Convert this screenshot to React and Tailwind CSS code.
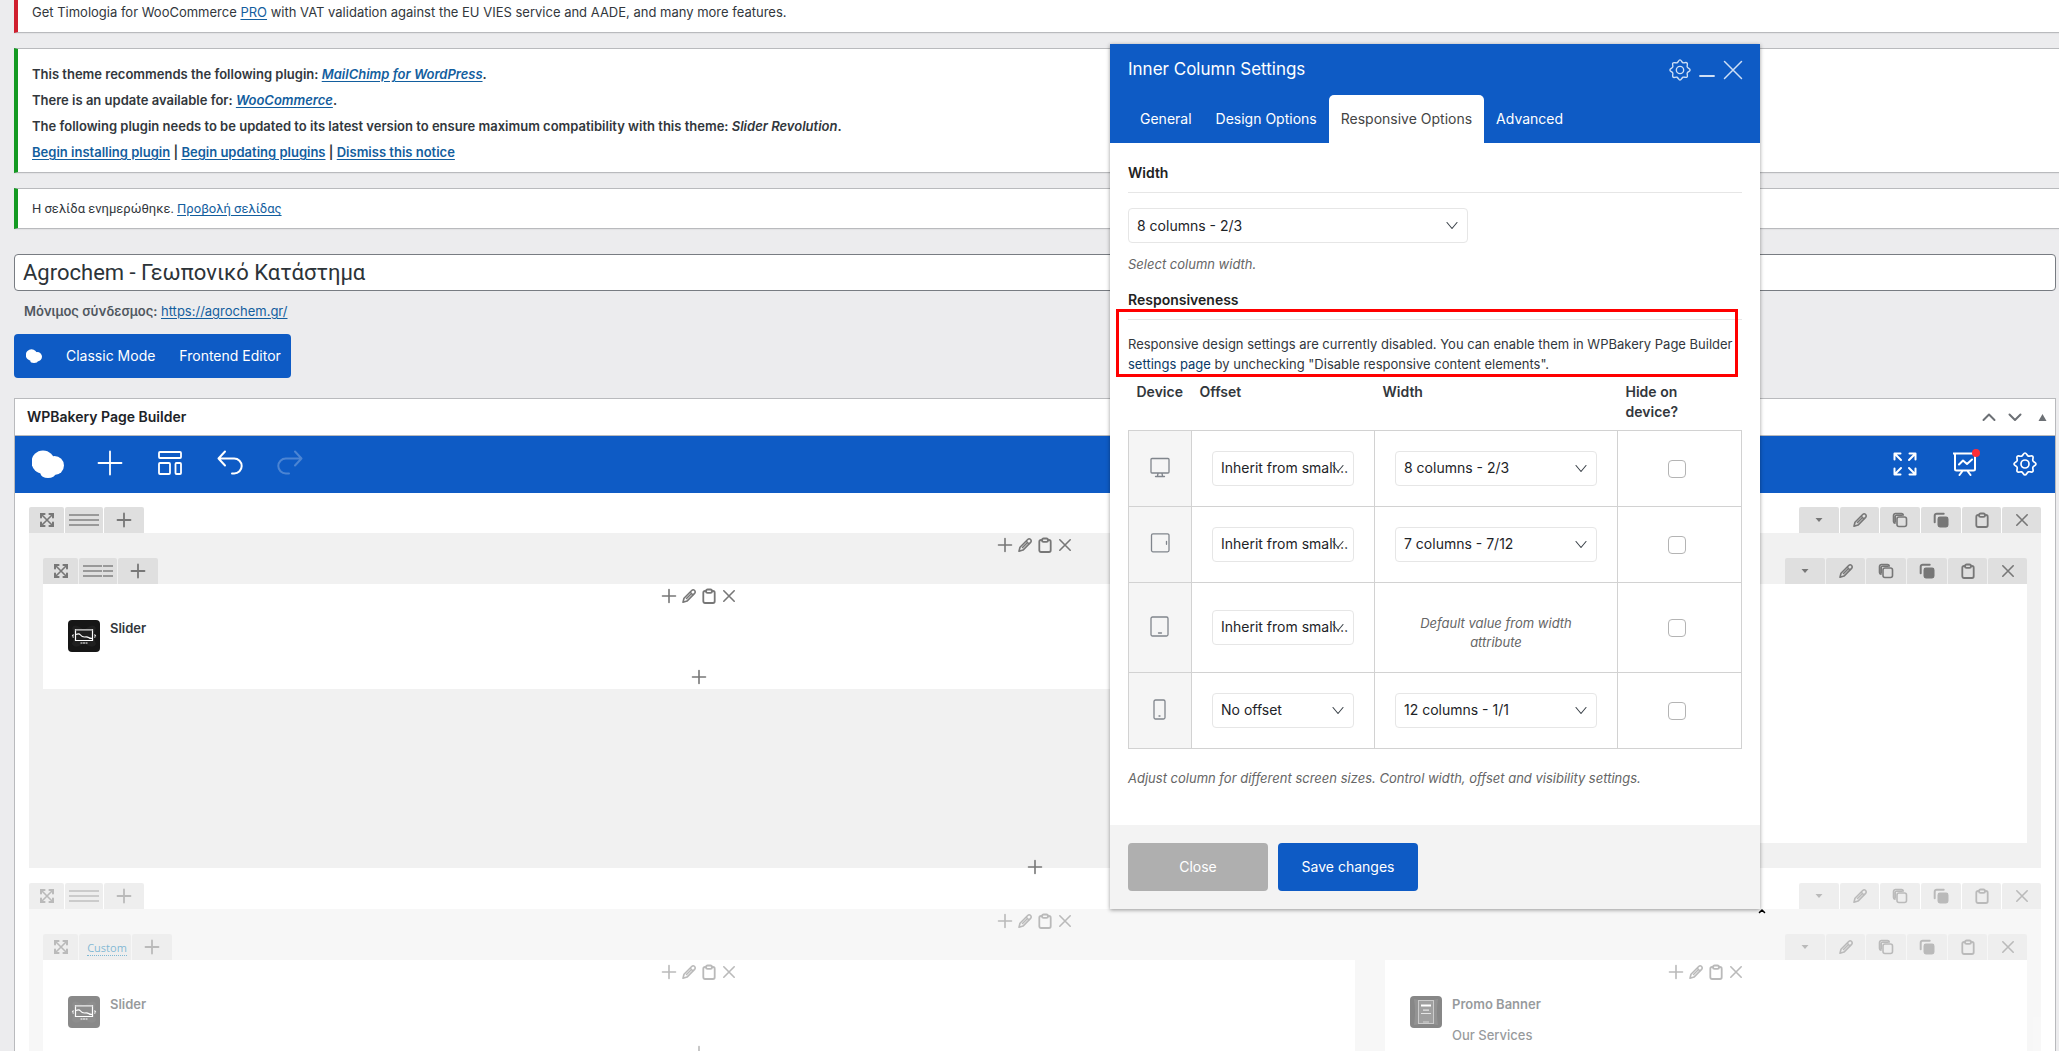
import React, { useState } from 'react';

const OFFSETS = ['Inherit from smaller', 'No offset', '1 column - 1/12'];
const WIDTHS = ['8 columns - 2/3', '7 columns - 7/12', '12 columns - 1/1'];

function Icon({ size = 16, box = 16, sw = 1.5, className = '', children }) {
  return (
    <svg
      width={size}
      height={size}
      viewBox={`0 0 ${box} ${box}`}
      fill="none"
      stroke="currentColor"
      strokeWidth={sw}
      strokeLinecap="round"
      strokeLinejoin="round"
      className={`shrink-0 ${className}`}
      aria-hidden="true"
    >
      {children}
    </svg>
  );
}

const Plus = ({ size = 16, sw = 1.6 }) => (
  <Icon size={size} sw={sw}>
    <path d="M8 1.500v13M1.500 8h13" />
  </Icon>
);

const Pencil = () => (
  <Icon sw={1.6}>
    <path d="M2 14.200l1-4L10.700 2.500a2 2 0 0 1 2.900 2.900L6 13.100z" />
    <path d="M9.500 4.500l2.200 2.200M5.500 10.500l4-4" />
  </Icon>
);

const Clipboard = () => (
  <Icon sw={1.8}>
    <path d="M4.500 3H4a1.700 1.700 0 0 0-1.700 1.700v8.600A1.700 1.700 0 0 0 4 15h8a1.700 1.700 0 0 0 1.700-1.700V4.700A1.700 1.700 0 0 0 12 3h-.5" />
    <rect x="5" y="1.500" width="6" height="3.400" rx="1.600" />
  </Icon>
);

const Cross = () => (
  <Icon sw={1.6}>
    <path d="M2.800 2.800l10.400 10.400M13.200 2.800L2.800 13.200" />
  </Icon>
);

const Copy = () => (
  <Icon sw={1.6}>
    <rect x="5" y="5" width="9.500" height="9.500" rx="2" />
    <path d="M3 11.200A1.900 1.900 0 0 1 1.500 9.400V3.500a2 2 0 0 1 2-2h6a1.900 1.900 0 0 1 1.800 1.500M3.200 10V4.600a1.400 1.400 0 0 1 1.400-1.400H10" />
  </Icon>
);

const CopyFilled = () => (
  <Icon sw={1.6}>
    <rect x="5.300" y="5.300" width="9.400" height="9.400" rx="1.600" fill="currentColor" />
    <path d="M1.700 10.300V3.700a2 2 0 0 1 2-2h7" strokeWidth="2" />
  </Icon>
);

const Move = () => (
  <Icon size={14} box={14} sw={1.6}>
    <path d="M2 2l10 10M12 2L2 12" />
    <path d="M1 4.600V1h3.600M9.400 1H13v3.600M13 9.400V13H9.400M4.600 13H1V9.400" strokeLinejoin="miter" strokeWidth="2" />
  </Icon>
);

const Caret = () => (
  <svg width="8" height="4" viewBox="0 0 8 4" fill="currentColor" aria-hidden="true">
    <path d="M0.500 0h7L4 4z" />
  </svg>
);

const Gear = ({ size = 24, sw = 1.7 }) => (
  <Icon size={size} box={24} sw={sw}>
    <path d="M12 1c1.600 0 1.800 2.500 3.300 3.100s3.300-1 4.400.2-.4 2.900.2 4.400S23 10.400 23 12s-2.500 1.800-3.100 3.300 1 3.300-.2 4.400-2.900-.4-4.400.2S13.600 23 12 23s-1.800-2.500-3.300-3.100-3.300 1-4.400-.2.400-2.900-.2-4.400S1 13.600 1 12s2.500-1.800 3.100-3.300-1-3.300.2-4.400 2.900.4 4.400-.2S10.400 1 12 1z" />
    <circle cx="12" cy="12" r="4" />
  </Icon>
);

const Logo = ({ width, height }) => (
  <svg width={width} height={height} viewBox="0 0 32 28" fill="currentColor" aria-hidden="true">
    <circle cx="11" cy="12" r="11.500" />
    <circle cx="22.500" cy="15.500" r="9.500" />
    <ellipse cx="16" cy="23.500" rx="7.500" ry="4.500" />
  </svg>
);

const SliderIcon = () => (
  <svg width="32" height="32" viewBox="0 0 32 32" className="shrink-0" fill="none" stroke="#fff" aria-hidden="true">
    <rect width="32" height="32" rx="4" fill="#161616" stroke="none" />
    <path d="M4 8q2-6 12 2 10-8 12-2-1 5-4 8 3 4 4 8-3 6-12-1-9 7-12 1 1-4 4-8-3-3-4-8z" fill="#202020" stroke="none" />
    <path d="M7.500 9.500h17v11h-17z" strokeWidth="1.200" />
    <path d="M7.500 10h17" stroke="#999" strokeWidth="1.600" />
    <path d="M8 14.500q3-1.500 4.500.5t4 2q3-.5 4 .5t4 1" strokeWidth="1.200" />
    <path d="M5.500 14.500L4.500 16l1 1.500M26.500 14.500l1 1.500-1 1.500M12.500 23h7" strokeWidth="1.200" strokeDasharray="2 .5" />
  </svg>
);

const PromoIcon = () => (
  <svg width="32" height="32" viewBox="0 0 32 32" className="shrink-0" fill="none" stroke="#fff" aria-hidden="true">
    <rect width="32" height="32" rx="4" fill="#111" stroke="none" />
    <path d="M4 3q12 3 24 0-2 13 0 26-12-3-24 0 2-13 0-26z" fill="#2a2a2a" stroke="none" />
    <rect x="8.500" y="4.500" width="15" height="23" fill="#444" stroke="#999" />
    <path d="M11 9.500h10" strokeWidth="2" />
    <path d="M13 14.200h6M11 17.500h10" stroke="#ccc" strokeWidth="1.200" />
    <path d="M13 26h6" stroke="#aaa" />
  </svg>
);

function Notice({ tone, className = '', children }) {
  return (
    <div className={`border border-r-0 border-l-4 border-[#b9babd] bg-white px-[14px] text-[13px] shadow-[0_1px_1px_rgba(0,0,0,0.04)] ${tone} ${className}`}>
      {children}
    </div>
  );
}

function Link({ children }) {
  return (
    <a href="#" className="text-[#135e9e] underline underline-offset-2">
      {children}
    </a>
  );
}

function Tab({ label, className = 'w-10', children }) {
  return (
    <button type="button" aria-label={label} className={`flex h-[26px] items-center justify-center rounded-t-xs bg-[#dfdfdf] ${className}`}>
      {children}
    </button>
  );
}

function RowBar({ layout }) {
  return (
    <div className="flex justify-between text-[#777]">
      <div className="flex gap-px">
        <Tab label="Move row" className="w-[35px]"><Move /></Tab>
        {layout === 'full' && (
          <Tab label="Row layout" className="w-[38px]">
            <svg width="30" height="14" viewBox="0 0 30 14" stroke="#999" strokeWidth="2" aria-hidden="true"><path d="M0 2h30M0 7h30M0 12h30" /></svg>
          </Tab>
        )}
        {layout === 'split' && (
          <Tab label="Row layout" className="w-[38px]">
            <svg width="30" height="14" viewBox="0 0 30 14" stroke="#999" strokeWidth="2" aria-hidden="true"><path d="M0 2h19M20 2h10M0 7h19M20 7h10M0 12h19M20 12h10" /></svg>
          </Tab>
        )}
        {layout === 'custom' && (
          <div className="flex h-[26px] w-[52px] items-end justify-center rounded-t-xs bg-[#dfdfdf] pb-1 pl-1">
            <a href="#" className="border-b border-dotted border-[#0073aa] font-['Open_Sans',sans-serif] text-[11px] leading-[14px] text-[#0073aa]">Custom</a>
          </div>
        )}
        <Tab label="Add column"><Plus sw={1.8} /></Tab>
      </div>
      <div className="flex gap-px">
        <Tab label="Toggle row"><Caret /></Tab>
        <Tab label="Edit row" className="w-[39px]"><Pencil /></Tab>
        <Tab label="Copy row"><Copy /></Tab>
        <Tab label="Clone row"><CopyFilled /></Tab>
        <Tab label="Paste" className="w-[39px]"><Clipboard /></Tab>
        <Tab label="Delete row" className="w-[39px]"><Cross /></Tab>
      </div>
    </div>
  );
}

function ColumnControls() {
  return (
    <div className="flex h-[25px] items-center justify-center gap-1 pb-px text-[#777]">
      <button type="button" aria-label="Add element"><Plus /></button>
      <button type="button" aria-label="Edit column"><Pencil /></button>
      <button type="button" aria-label="Paste"><Clipboard /></button>
      <button type="button" aria-label="Delete column"><Cross /></button>
    </div>
  );
}

function Element({ icon, title, text }) {
  return (
    <div className="flex gap-[10px] px-[25px] pt-[11px] text-[13px] leading-[17px]">
      {icon}
      <div>
        <h4 className="font-semibold text-[#32373c]">{title}</h4>
        {text && <p className="mt-[14px] font-medium">{text}</p>}
      </div>
    </div>
  );
}

function AddButton() {
  return (
    <button type="button" aria-label="Add element" className="mx-auto flex h-6 w-10 items-center justify-center text-[#777]">
      <Plus />
    </button>
  );
}

function Select({ label, options, value, className = '' }) {
  return (
    <div className={`relative ${className}`}>
      <select
        aria-label={label}
        defaultValue={value}
        className="block h-[35px] w-full appearance-none truncate rounded border border-[#e6e6e6] bg-white pr-1 pl-2 text-sm text-[#1d2327]"
      >
        {options.map((o) => (
          <option key={o}>{o}</option>
        ))}
      </select>
      <Icon size={12} box={12} sw={1.1} className="pointer-events-none absolute top-3 right-[10px] text-[#3c434a]">
        <path d="M1 2.500l5 6 5-6" />
      </Icon>
    </div>
  );
}

const DEVICES = [
  {
    name: 'Desktop',
    offset: 'Inherit from smaller',
    width: '8 columns - 2/3',
    icon: <path d="M3 1.500h16a1 1 0 0 1 1 1V15a1 1 0 0 1-1 1H3a1 1 0 0 1-1-1V2.500a1 1 0 0 1 1-1zM9 16.500l-.5 2.500M13 16.500l.5 2.500M6.500 19.500h9" />,
  },
  {
    name: 'Tablet landscape',
    offset: 'Inherit from smaller',
    width: '7 columns - 7/12',
    icon: <path d="M4 .8h14.500a1.500 1.500 0 0 1 1.500 1.500v15a1.500 1.500 0 0 1-1.500 1.500H4a1.500 1.500 0 0 1-1.500-1.500v-15A1.500 1.500 0 0 1 4 .8zM17.500 8.300v3" />,
  },
  {
    name: 'Tablet portrait',
    offset: 'Inherit from smaller',
    width: null,
    icon: <path d="M3.500 1h14A1.500 1.500 0 0 1 19 2.500v16a1.500 1.500 0 0 1-1.500 1.500h-14A1.500 1.500 0 0 1 2 18.500v-16A1.500 1.500 0 0 1 3.500 1zM9.500 17h3" />,
  },
  {
    name: 'Mobile',
    offset: 'No offset',
    width: '12 columns - 1/1',
    icon: <path d="M6.500 1h8A1.500 1.500 0 0 1 16 2.500v16a1.500 1.500 0 0 1-1.500 1.500h-8A1.500 1.500 0 0 1 5 18.500v-16A1.500 1.500 0 0 1 6.500 1zM10 17h1" />,
  },
];

const TABS = ['General', 'Design Options', 'Responsive Options', 'Advanced'];

function SettingsPanel() {
  const [tab, setTab] = useState('Responsive Options');

  return (
    <section className="absolute top-11 left-[1110px] z-10 w-[650px] bg-white shadow-[0_1px_4px_rgba(0,0,0,0.4)]">
      <header className="bg-[#0e5bc5] pr-[17px] pl-[18px] text-white">
        <div className="flex h-[51px] items-center justify-between">
          <h3 className="text-[17px]">Inner Column Settings</h3>
          <div className="flex items-center gap-2 text-[#cfdff5]">
            <button type="button" aria-label="Settings"><Gear size={22} sw={1.5} /></button>
            <button type="button" aria-label="Minimize">
              <Icon sw={1.8}><path d="M1 14h14" /></Icon>
            </button>
            <button type="button" aria-label="Close panel">
              <Icon size={20} box={20} sw={1.5}><path d="M1.500 1.500l17 17M18.500 1.500l-17 17" /></Icon>
            </button>
          </div>
        </div>
        <nav className="flex">
          {TABS.map((t) => (
            <button
              key={t}
              type="button"
              onClick={() => setTab(t)}
              className={`h-12 rounded-t-[5px] px-3 text-sm ${t === tab ? 'bg-white text-[#444]' : 'text-white'}`}
            >
              {t}
            </button>
          ))}
        </nav>
      </header>

      <div className="px-[18px] pt-5 pb-[37px] text-[#32373c]">
        <h4 className="border-b border-[#e6e6e6] pb-[9px] text-sm leading-5 font-semibold text-[#222]">Width</h4>
        <Select label="Width" options={WIDTHS} value="8 columns - 2/3" className="mt-[15px] w-[340px]" />
        <p className="mt-[11px] text-[13px] leading-5 text-[#666] italic">Select column width.</p>

        <h4 className="mt-4 border-b border-[#e6e6e6] pb-[9px] text-sm leading-5 font-semibold text-[#222]">Responsiveness</h4>
        <div className="relative mt-[14px] text-[13px] leading-5">
          <div className="pointer-events-none absolute -top-[25px] right-1 -bottom-[3px] -left-3 border-[3px] border-[#ff0000]" />
          Responsive design settings are currently disabled. You can enable them in WPBakery Page Builder{' '}
          <a href="#" className="text-[#0a3a66]">settings page</a> by unchecking "Disable responsive content elements".
        </div>

        <table className="mt-2 w-full table-fixed border-collapse text-sm">
          <colgroup>
            <col className="w-[63px]" />
            <col className="w-[183px]" />
            <col className="w-[243px]" />
            <col />
          </colgroup>
          <thead>
            <tr className="text-left align-top leading-5">
              <th className="h-12 px-2 font-semibold">Device</th>
              <th className="px-2 font-semibold">Offset</th>
              <th className="px-2 font-semibold">Width</th>
              <th className="px-2 font-semibold">Hide on<br />device?</th>
            </tr>
          </thead>
          <tbody>
            {DEVICES.map((d) => (
              <tr key={d.name} className={d.width ? 'h-[76px]' : 'h-[90px]'}>
                <td className="border border-[#d2d2d2] bg-[#f5f5f5]">
                  <Icon size={22} box={22} sw={1.3} className="mx-auto text-[#80858c]">{d.icon}</Icon>
                </td>
                <td className="border border-[#d2d2d2] px-5">
                  <Select label={`${d.name} offset`} options={OFFSETS} value={d.offset} />
                </td>
                <td className="border border-[#d2d2d2] px-5">
                  {d.width ? (
                    <Select label={`${d.name} width`} options={WIDTHS} value={d.width} />
                  ) : (
                    <p className="pt-3 text-center text-[13px] leading-[19px] text-[#666] italic">Default value from width attribute</p>
                  )}
                </td>
                <td className="border border-[#d2d2d2] text-center">
                  <input
                    type="checkbox"
                    aria-label={`Hide on ${d.name}`}
                    className="mr-[6px] size-[18px] appearance-none rounded border border-[#b4b4b4] bg-white align-middle"
                  />
                </td>
              </tr>
            ))}
          </tbody>
        </table>
        <p className="mt-[19px] text-[13px] leading-5 text-[#666] italic">
          Adjust column for different screen sizes. Control width, offset and visibility settings.
        </p>
      </div>

      <footer className="flex gap-[10px] bg-[#f3f3f3] p-[18px] text-sm text-white">
        <button type="button" className="h-12 w-[140px] rounded bg-[#afafaf]">Close</button>
        <button type="button" className="h-12 w-[140px] rounded bg-[#0e5bc5]">Save changes</button>
      </footer>
      <Icon size={8} box={8} sw={1.6} className="absolute -right-[6px] -bottom-[6px] text-black">
        <path d="M1.500 5.500L4 3l2.500 2.500" />
      </Icon>
    </section>
  );
}

export default function App() {
  return (
    <div className="relative h-screen overflow-hidden bg-[#ececee] pr-[3px] pl-[14px] font-['Inter',sans-serif] text-[13px] text-[#32373c]">
      <div className="-mr-[3px] flex flex-col gap-[15px]">
        <Notice tone="border-l-[#d01f2e]" className="border-t-0 pt-[2px] pb-[10px] leading-5">
          Get Timologia for WooCommerce <Link>PRO</Link> with VAT validation against the EU VIES service and AADE, and many more features.
        </Notice>
        <Notice tone="border-l-[#149a22]" className="pt-3 pb-[7px] leading-[26px] font-semibold">
          <p>This theme recommends the following plugin: <em><Link>MailChimp for WordPress</Link></em>.</p>
          <p>There is an update available for: <em><Link>WooCommerce</Link></em>.</p>
          <p>The following plugin needs to be updated to its latest version to ensure maximum compatibility with this theme: <em>Slider Revolution</em>.</p>
          <p><Link>Begin installing plugin</Link> | <Link>Begin updating plugins</Link> | <Link>Dismiss this notice</Link></p>
        </Notice>
        <Notice tone="border-l-[#149a22]" className="py-[10px] font-['Roboto',sans-serif] leading-[19px]">
          Η σελίδα ενημερώθηκε. <Link>Προβολή σελίδας</Link>
        </Notice>
      </div>

      <input
        id="title"
        aria-label="Title"
        defaultValue="Agrochem - Γεωπονικό Κατάστημα"
        className="mt-[25px] block h-[37px] w-full rounded border border-[#787c82] bg-white px-2 font-['Roboto',sans-serif] text-[22px] text-[#2c3338]"
      />
      <p className="mt-[10px] px-[10px] leading-5 text-[#50575e]">
        <strong className="font-semibold">Μόνιμος σύνδεσμος:</strong> <Link>https://agrochem.gr/</Link>
      </p>

      <div className="mt-[13px] flex h-11 w-fit items-center rounded bg-[#0e5bc5] pr-[10px] pl-3 text-sm text-white">
        <Logo width="16" height="14" />
        <button type="button" className="ml-6">Classic Mode</button>
        <button type="button" className="ml-6">Frontend Editor</button>
      </div>

      <div className="mt-5 border border-[#b9babd] bg-white">
        <div className="flex h-[37px] items-center justify-between border-b border-[#b9babd] pr-2 pl-3">
          <h2 className="text-sm font-semibold text-[#1d2327]">WPBakery Page Builder</h2>
          <div className="flex items-center gap-3 text-[#6c7075]">
            <button type="button" aria-label="Move up"><Icon size={14} box={14} sw={2}><path d="M1.500 10L7 4.500l5.500 5.500" /></Icon></button>
            <button type="button" aria-label="Move down"><Icon size={14} box={14} sw={2}><path d="M1.500 4.500L7 10l5.500-5.500" /></Icon></button>
            <button type="button" aria-label="Toggle panel" className="pl-1">
              <svg width="9" height="7" viewBox="0 0 9 7" fill="currentColor" aria-hidden="true"><path d="M4.500 0L8.500 7h-8z" /></svg>
            </button>
          </div>
        </div>

        <div className="flex h-[57px] items-center justify-between bg-[#0e5bc5] pb-px text-white">
          <div className="flex">
            <a href="#" aria-label="WPBakery" className="flex w-[65px] justify-center"><Logo width="32" height="28" /></a>
            <button type="button" aria-label="Add element" className="flex w-[60px] justify-center">
              <Icon size={26} box={26} sw={1.8}><path d="M13 1.500v23M1.500 13h23" /></Icon>
            </button>
            <button type="button" aria-label="Templates" className="flex w-[60px] justify-center">
              <Icon size={26} box={26} sw={1.8}>
                <rect x="2" y="2" width="22" height="6" rx="1" />
                <rect x="2" y="13" width="11" height="11" rx="1" />
                <rect x="18.500" y="13" width="5.500" height="11" rx="1" />
              </Icon>
            </button>
            <button type="button" aria-label="Undo" className="flex w-[60px] justify-center">
              <Icon size={26} box={26} sw={2}><path d="M8 1.500L1.500 8.500 8 15.500M1.500 8.500h15.700a7.500 7.500 0 0 1 0 15H15" /></Icon>
            </button>
            <button type="button" aria-label="Redo" className="flex w-[60px] justify-center opacity-25">
              <Icon size={26} box={26} sw={2}><path d="M18 1.500l6.500 7-6.500 7M24.500 8.500H8.800a7.500 7.500 0 0 0 0 15H12" /></Icon>
            </button>
          </div>
          <div className="flex">
            <button type="button" aria-label="Fullscreen" className="flex w-[60px] justify-center">
              <Icon size={24} box={24} sw={2}>
                <path d="M1.500 7.500v-6h6M1.500 1.500L8 8M16.500 1.500h6v6M22.500 1.500L16 8M22.500 16.500v6h-6M22.500 22.500L16 16M7.500 22.500h-6v-6M1.500 22.500L8 16" />
              </Icon>
            </button>
            <button type="button" aria-label="SEO" className="relative flex w-[60px] justify-center">
              <Icon size={24} box={24} sw={2}>
                <path d="M0.500 1.500h23M2 1.500V17a1.500 1.500 0 0 0 1.500 1.500h17A1.500 1.500 0 0 0 22 17V1.500M9.500 19l-3 4M14.500 19l3 4M6 12.500l4-4 4 3.500 5-4.500" />
              </Icon>
              <span className="absolute -top-[3px] right-[15px] size-2 rounded-full bg-[#ff2d37]" />
            </button>
            <button type="button" aria-label="Settings" className="flex w-[60px] justify-center"><Gear /></button>
          </div>
        </div>

        <div className="px-[14px] pt-[14px]">
          <RowBar layout="full" />
          <div className="bg-[#f1f1f1] px-[14px] pb-[25px]">
            <ColumnControls />
            <RowBar layout="split" />
            <div className="grid grid-cols-[1312fr_642fr] items-start gap-[30px]">
              <div className="h-[105px] bg-white">
                <ColumnControls />
                <Element icon={<SliderIcon />} title="Slider" />
                <div className="mt-[13px]"><AddButton /></div>
              </div>
              <div className="h-[259px] bg-white">
                <ColumnControls />
              </div>
            </div>
          </div>
          <div className="relative -mt-[13px] flex justify-center"><AddButton /></div>

          <div className="mt-1 opacity-50">
            <RowBar layout="full" />
            <div className="bg-[#f1f1f1] px-[14px]">
              <ColumnControls />
              <RowBar layout="custom" />
              <div className="grid grid-cols-[1312fr_642fr] gap-[30px]">
                <div className="bg-white">
                  <ColumnControls />
                  <Element icon={<SliderIcon />} title="Slider" />
                  <div className="mt-[13px]"><AddButton /></div>
                </div>
                <div className="bg-white">
                  <ColumnControls />
                  <Element icon={<PromoIcon />} title="Promo Banner" text="Our Services" />
                </div>
              </div>
            </div>
          </div>
        </div>
      </div>

      <SettingsPanel />
    </div>
  );
}
